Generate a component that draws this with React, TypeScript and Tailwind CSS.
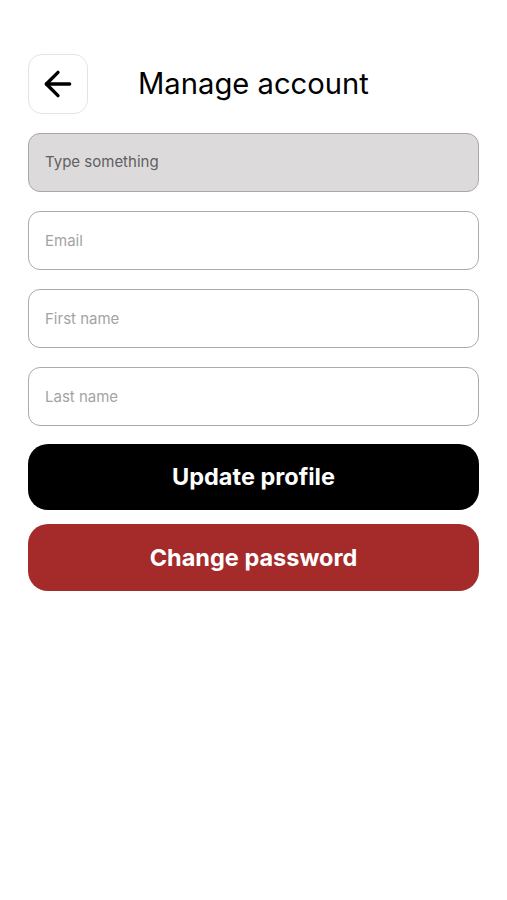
import { ArrowLeft } from "lucide-react";

const fields = ["Email", "First name", "Last name"];

export default function App() {
  return (
    <div
      className="min-h-[900px] bg-white px-[28px] pt-[54px]"
      style={{ fontFamily: "Inter, 'Noto Sans', sans-serif" }}
    >
      <div className="flex items-center">
        <button className="flex h-[60px] w-[60px] items-center justify-center rounded-[14px] border border-[#e4e4e4] bg-white">
          <ArrowLeft className="h-[40px] w-[40px] text-black" strokeWidth={2} />
        </button>
        <h1 className="ml-[50px] text-[29.2px] font-normal text-black">Manage account</h1>
      </div>

      <div className="mt-[19px] flex flex-col gap-[19px]">
        <div className="flex h-[59px] items-center rounded-[12px] border border-[#a8a8a8] bg-[#dddadb] px-[16px] text-[15px] text-[#5f5f5f]">
          Type something
        </div>
        {fields.map((f) => (
          <input
            key={f}
            placeholder={f}
            className="h-[59px] rounded-[12px] border border-[#ababab] bg-white px-[16px] text-[15px] outline-none placeholder:text-[#a3a3a3]"
          />
        ))}
      </div>

      <div className="mt-[18px] flex flex-col gap-[14px]">
        <button className="h-[66px] rounded-[20px] bg-black text-[23.5px] font-bold text-white">
          Update profile
        </button>
        <button className="h-[67px] rounded-[20px] bg-[#a52a2a] text-[23.5px] font-bold text-white">
          Change password
        </button>
      </div>
    </div>
  );
}
